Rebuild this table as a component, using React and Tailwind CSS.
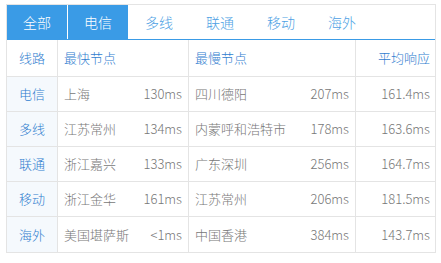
const tabs = ["全部", "电信", "多线", "联通", "移动", "海外"];
const activeTabs = ["全部", "电信"];

const rows = [
  { line: "电信", fast: "上海", fastMs: "130ms", slow: "四川德阳", slowMs: "207ms", avg: "161.4ms" },
  { line: "多线", fast: "江苏常州", fastMs: "134ms", slow: "内蒙呼和浩特市", slowMs: "178ms", avg: "163.6ms" },
  { line: "联通", fast: "浙江嘉兴", fastMs: "133ms", slow: "广东深圳", slowMs: "256ms", avg: "164.7ms" },
  { line: "移动", fast: "浙江金华", fastMs: "161ms", slow: "江苏常州", slowMs: "206ms", avg: "181.5ms" },
  { line: "海外", fast: "美国堪萨斯", fastMs: "<1ms", slow: "中国香港", slowMs: "384ms", avg: "143.7ms" },
];

export default function App() {
  return (
    <div
      className="w-[441px] h-[263px] bg-white pl-[6px] pt-[4px] font-light"
      style={{ fontFamily: '"Noto Sans CJK SC", "Noto Sans", sans-serif' }}
    >
      <div className="w-[430px] border border-[#e4e4e4]">
        {/* Tabs */}
        <div className="flex h-[35px] border-b border-[#3a9be6]">
          {tabs.map((t) => {
            const active = activeTabs.includes(t);
            return (
              <div
                key={t}
                className={
                  "w-[61px] border-r border-white flex items-center justify-center text-[14px] " +
                  (active ? "bg-[#3a9be6] text-white" : "text-[#4d9fe4]")
                }
              >
                {t}
              </div>
            );
          })}
        </div>

        {/* Table */}
        <div className="grid grid-cols-[51px_131px_167px_79px] text-[13px]">
          <div className="h-[37px] border-r border-b border-[#e4e4e4] flex items-center justify-center text-[#2f7dcf]">
            线路
          </div>
          <div className="h-[37px] border-r border-b border-[#e4e4e4] flex items-center pl-[6px] text-[#2f7dcf]">
            最快节点
          </div>
          <div className="h-[37px] border-r border-b border-[#e4e4e4] flex items-center pl-[6px] text-[#2f7dcf]">
            最慢节点
          </div>
          <div className="h-[37px] border-b border-[#e4e4e4] flex items-center justify-end pr-[5px] text-[#2f7dcf]">
            平均响应
          </div>

          {rows.map((r, i) => {
            const last = i === rows.length - 1;
            const b = last ? "" : " border-b";
            return [
              <div
                key={r.line + "a"}
                className={"h-[35px] border-r border-[#e4e4e4] bg-[#f5f9fd] flex items-center justify-center text-[#2f7dcf]" + b}
              >
                {r.line}
              </div>,
              <div
                key={r.line + "b"}
                className={"h-[35px] border-r border-[#e4e4e4] flex items-center justify-between px-[6px] text-[#777]" + b}
              >
                <span>{r.fast}</span>
                <span>{r.fastMs}</span>
              </div>,
              <div
                key={r.line + "c"}
                className={"h-[35px] border-r border-[#e4e4e4] flex items-center justify-between px-[6px] text-[#777]" + b}
              >
                <span>{r.slow}</span>
                <span>{r.slowMs}</span>
              </div>,
              <div
                key={r.line + "d"}
                className={"h-[35px] border-[#e4e4e4] flex items-center justify-end pr-[5px] text-[#777]" + b}
              >
                {r.avg}
              </div>,
            ];
          })}
        </div>
      </div>
    </div>
  );
}
